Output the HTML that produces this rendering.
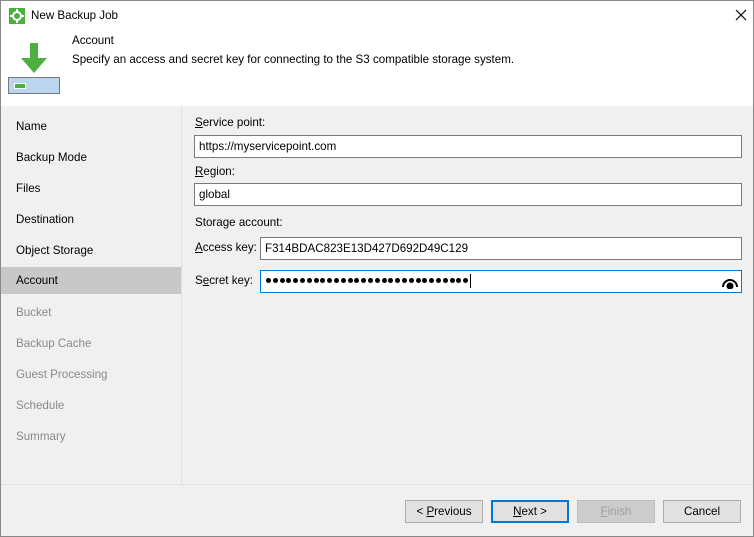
<!DOCTYPE html><html><head><style>
body{margin:0;width:754px;height:537px;overflow:hidden;font-family:"Segoe UI","Liberation Sans",sans-serif;font-size:11.6px;color:#000;background:#f0f0f0}
.win{position:absolute;left:0;top:0;width:752px;height:535px;border:1px solid #888;background:#f0f0f0}
.a{position:absolute}
.nav div{position:absolute;left:0;width:180px;height:27px;line-height:27px;padding-left:15px;box-sizing:border-box}
.in{position:absolute;background:#fff;border:1px solid #7a7a7a;box-sizing:border-box;height:23px;line-height:21px;padding-left:4px}
.btn{position:absolute;top:499px;height:23px;width:78px;border:1px solid #adadad;background:#e1e1e1;box-sizing:border-box;text-align:center;line-height:21px}
u{text-decoration:underline}
.dots span{display:inline-block;width:5px;height:5px;border-radius:50%;background:#000;margin-right:1.8px;vertical-align:middle}
</style></head><body><div class="win">
<div class="a" style="left:0;top:0;width:752px;height:105px;background:#fff"></div>
<div class="a" style="left:8px;top:7px;width:16px;height:16px;background:#4caf3f"></div>
<svg class="a" style="left:8px;top:7px" width="16" height="16"><circle cx="8" cy="8" r="4" fill="none" stroke="#fff" stroke-width="2"/><g stroke="#fff" stroke-width="2"><line x1="8" y1="1" x2="8" y2="4"/><line x1="8" y1="12" x2="8" y2="15"/><line x1="1" y1="8" x2="4" y2="8"/><line x1="12" y1="8" x2="15" y2="8"/></g></svg>
<div class="a" style="left:30px;top:8px">New Backup Job</div>
<svg class="a" style="left:734px;top:8px" width="12" height="12"><path d="M1 1L11 11M11 1L1 11" stroke="#000" stroke-width="1.2"/></svg>
<svg class="a" style="left:18px;top:42px" width="30" height="32"><path d="M11 0h8v15h9L15 30 2 15h9z" fill="#4caf3f"/></svg>
<div class="a" style="left:7px;top:76px;width:50px;height:15px;border:1px solid #777;background:#bcd5ee"></div>
<div class="a" style="left:13px;top:82px;width:10px;height:4px;background:#4caf3f;border:1px solid #fff"></div>
<div class="a" style="left:71px;top:33px">Account</div>
<div class="a" style="left:71px;top:52px">Specify an access and secret key for connecting to the S3 compatible storage system.</div>
<div class="a" style="left:180px;top:105px;width:1px;height:378px;background:#e0e0e0"></div>
<div class="nav">
<div style="top:112px">Name</div><div style="top:143px">Backup Mode</div><div style="top:174px">Files</div><div style="top:205px">Destination</div><div style="top:236px">Object Storage</div>
<div style="top:266px;background:#c8c8c8">Account</div>
<div style="top:298px;color:#8a8a8a">Bucket</div><div style="top:329px;color:#8a8a8a">Backup Cache</div><div style="top:360px;color:#8a8a8a">Guest Processing</div><div style="top:391px;color:#8a8a8a">Schedule</div><div style="top:422px;color:#8a8a8a">Summary</div>
</div>
<div class="a" style="left:194px;top:115px"><u>S</u>ervice point:</div>
<div class="in" style="left:193px;top:134px;width:548px">https://myservicepoint.com</div>
<div class="a" style="left:194px;top:164px"><u>R</u>egion:</div>
<div class="in" style="left:193px;top:182px;width:548px">global</div>
<div class="a" style="left:194px;top:215px">Storage account:</div>
<div class="a" style="left:194px;top:240px"><u>A</u>ccess key:</div>
<div class="in" style="left:259px;top:236px;width:482px">F314BDAC823E13D427D692D49C129</div>
<div class="a" style="left:194px;top:273px">S<u>e</u>cret key:</div>
<div class="in dots" style="left:259px;top:269px;width:482px;border-color:#0078d7;padding-left:5px;line-height:20px"><span></span><span></span><span></span><span></span><span></span><span></span><span></span><span></span><span></span><span></span><span></span><span></span><span></span><span></span><span></span><span></span><span></span><span></span><span></span><span></span><span></span><span></span><span></span><span></span><span></span><span></span><span></span><span></span><span></span><span></span><i style="display:inline-block;width:1px;height:14px;background:#000;vertical-align:middle"></i></div>
<svg class="a" style="left:721px;top:276px" width="16" height="12"><path d="M1 10A7 7 0 0 1 15 10" fill="none" stroke="#000" stroke-width="2"/><circle cx="8" cy="9" r="3.5"/></svg>
<div class="a" style="left:0;top:483px;width:752px;height:1px;background:#e3e3e3"></div>
<div class="btn" style="left:404px">&lt; <u>P</u>revious</div>
<div class="btn" style="left:490px;border:2px solid #0078d7;line-height:19px"><u>N</u>ext &gt;</div>
<div class="btn" style="left:576px;background:#ccc;border-color:#bfbfbf;color:#a0a0a0"><u>F</u>inish</div>
<div class="btn" style="left:662px">Cancel</div>
</div></body></html>
